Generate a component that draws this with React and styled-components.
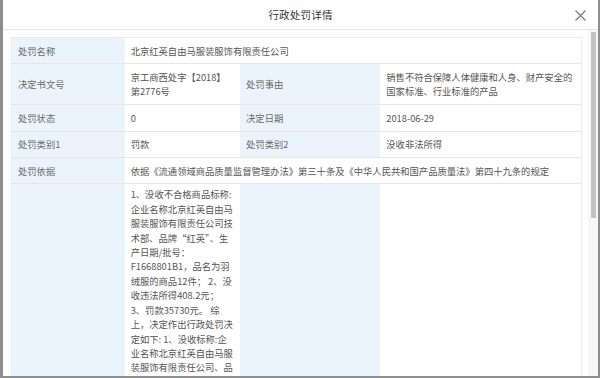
import React from "react";
import styled, { createGlobalStyle } from "styled-components";

const GlobalStyle = createGlobalStyle`
  html, body {
    margin: 0;
    padding: 0;
    background: #8e8e8e;
    font-family: "Noto Sans CJK SC", "Noto Sans", sans-serif;
  }
`;

const Backdrop = styled.div`
  width: 600px;
  height: 378px;
  display: flex;
  align-items: flex-start;
  padding: 0 2px 0 3px;
  box-sizing: border-box;
`;

const Dialog = styled.div`
  flex: 1;
  height: 376px;
  background: #fff;
  display: flex;
  flex-direction: column;
`;

const Header = styled.div`
  height: 30px;
  flex: none;
  display: flex;
  align-items: center;
  justify-content: center;
  position: relative;
  border-bottom: 1px solid #e6e6e6;
  box-sizing: border-box;
`;

const Title = styled.div`
  font-size: 10.5px;
  color: #333;
  letter-spacing: 0.2px;
`;

const Close = styled.button`
  position: absolute;
  right: 10px;
  top: 7px;
  width: 16px;
  height: 16px;
  padding: 0;
  border: none;
  background: none;
  display: flex;
  align-items: center;
  justify-content: center;
  color: #777;
`;

const Body = styled.div`
  flex: 1;
  min-height: 0;
  display: flex;
`;

const Content = styled.div`
  flex: 1;
  overflow: hidden;
  padding: 7px 6px 7px 8px;
`;

const ScrollTrack = styled.div`
  width: 10px;
  flex: none;
  background: #f7f7f7;
  padding: 2px 2px 0 3px;
  box-sizing: border-box;
`;

const ScrollThumb = styled.div`
  height: ${(p) => p.$h}px;
  background: #c3c3c3;
`;

const Table = styled.table`
  width: 100%;
  border-collapse: collapse;
  table-layout: fixed;
  border: 1px solid #ececec;
  font-size: 9.3px;
  line-height: 14.4px;
`;

const Label = styled.td`
  background: #ebf4fc;
  color: #6a6a6a;
  padding: 5.5px 6px;
  border-bottom: 1px solid #e6e6e6;
  vertical-align: middle;
`;

const Value = styled.td`
  background: #fff;
  color: #555;
  padding: ${(p) => (p.$top ? "3px 6px 5.5px" : "5.5px 6px")};
  border-bottom: 1px solid #e6e6e6;
  vertical-align: ${(p) => (p.$top ? "top" : "middle")};
  word-break: normal;
  overflow-wrap: break-word;
`;

const CloseIcon = () => (
  <svg width="13" height="13" viewBox="0 0 13 13" fill="none" stroke="currentColor" strokeWidth="1.1">
    <path d="M1.5 1.5 L11.5 11.5 M11.5 1.5 L1.5 11.5" />
  </svg>
);

const detail =
  "1、没收不合格商品标称:企业名称北京红英自由马服装服饰有限责任公司技术部、品牌“红英”、生产日期/批号：F1668801B1，品名为羽绒服的商品12件； 2、没收违法所得408.2元； 3、罚款35730元。 综上，决定作出行政处罚决定如下: 1、没收标称:企业名称北京红英自由马服装服饰有限责任公司、品牌“红英”、生产日期/批号：F1668801B1，品名为羽绒服的商品12件；2、没收违法所得408.2元；3、罚款35730元。当事人应当自收到本处罚决定书之日起十五日内，持本处罚决定书到指定银行缴纳罚没款。逾期不缴纳的，每日按罚款数额的百分之三加处罚款。当事人如不服本处罚决定，可以在收到本处罚决定书之日起六十日内向北京市工商行政管理局或者北京市西城区人民政府申请行政复议；也可以在六个月内依法向人民法院提起行政诉讼。";

export default function App() {
  return (
    <>
      <GlobalStyle />
      <Backdrop>
        <Dialog>
          <Header>
            <Title>行政处罚详情</Title>
            <Close aria-label="关闭">
              <CloseIcon />
            </Close>
          </Header>
          <Body>
            <Content>
              <Table>
                <colgroup>
                  <col style={{ width: "19.85%" }} />
                  <col style={{ width: "20.25%" }} />
                  <col style={{ width: "24.6%" }} />
                  <col style={{ width: "35.3%" }} />
                </colgroup>
                <tbody>
                  <tr>
                    <Label>处罚名称</Label>
                    <Value colSpan={3}>北京红英自由马服装服饰有限责任公司</Value>
                  </tr>
                  <tr>
                    <Label>决定书文号</Label>
                    <Value>京工商西处字【2018】第2776号</Value>
                    <Label>处罚事由</Label>
                    <Value>销售不符合保障人体健康和人身、财产安全的国家标准、行业标准的产品</Value>
                  </tr>
                  <tr>
                    <Label>处罚状态</Label>
                    <Value>0</Value>
                    <Label>决定日期</Label>
                    <Value>2018-06-29</Value>
                  </tr>
                  <tr>
                    <Label>处罚类别1</Label>
                    <Value>罚款</Value>
                    <Label>处罚类别2</Label>
                    <Value>没收非法所得</Value>
                  </tr>
                  <tr>
                    <Label>处罚依据</Label>
                    <Value colSpan={3}>
                      依据《流通领域商品质量监督管理办法》第三十条及《中华人民共和国产品质量法》第四十九条的规定
                    </Value>
                  </tr>
                  <tr>
                    <Label></Label>
                    <Value $top>{detail}</Value>
                    <Label></Label>
                    <Value></Value>
                  </tr>
                </tbody>
              </Table>
            </Content>
            <ScrollTrack>
              <ScrollThumb $h={186} />
            </ScrollTrack>
          </Body>
        </Dialog>
      </Backdrop>
    </>
  );
}
